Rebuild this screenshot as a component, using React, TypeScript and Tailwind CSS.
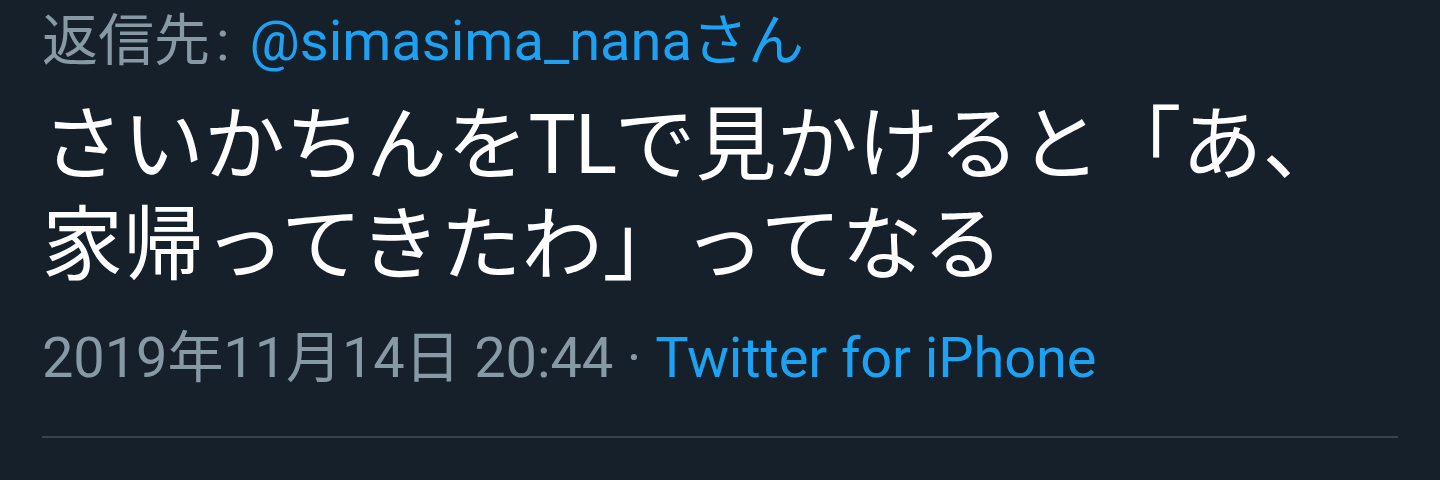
export default function App() {
  return (
    <div className="min-h-screen bg-[#15202b] px-[42px] pt-[9px] font-['Roboto','Noto_Sans_CJK_JP',sans-serif]">
      {/* reply to */}
      <p className="text-[56px] leading-[64px] text-[#8899a6] whitespace-nowrap">
        返信先<span className="ml-[6px]">:</span>{" "}
        <span className="ml-[6px] text-[#1da1f2]">@simasima_nanaさん</span>
      </p>

      {/* tweet body */}
      <p className="mt-[15px] font-['Noto_Sans_CJK_JP',sans-serif] text-[81px] leading-[100px] text-white whitespace-nowrap">
        さいかちんを<span className="tracking-[-3px]">TL</span>で見かけると「あ、
        <br />
        家帰ってきたわ」ってなる
      </p>

      {/* meta */}
      <p className="mt-[38px] text-[56px] leading-[64px] tracking-[-0.12px] text-[#8899a6] whitespace-nowrap">
        2019年11月14日 20:44 · <span className="text-[#1da1f2]">Twitter for iPhone</span>
      </p>

      <div className="mt-[46px] border-t-2 border-[#38444d]" />
    </div>
  );
}
